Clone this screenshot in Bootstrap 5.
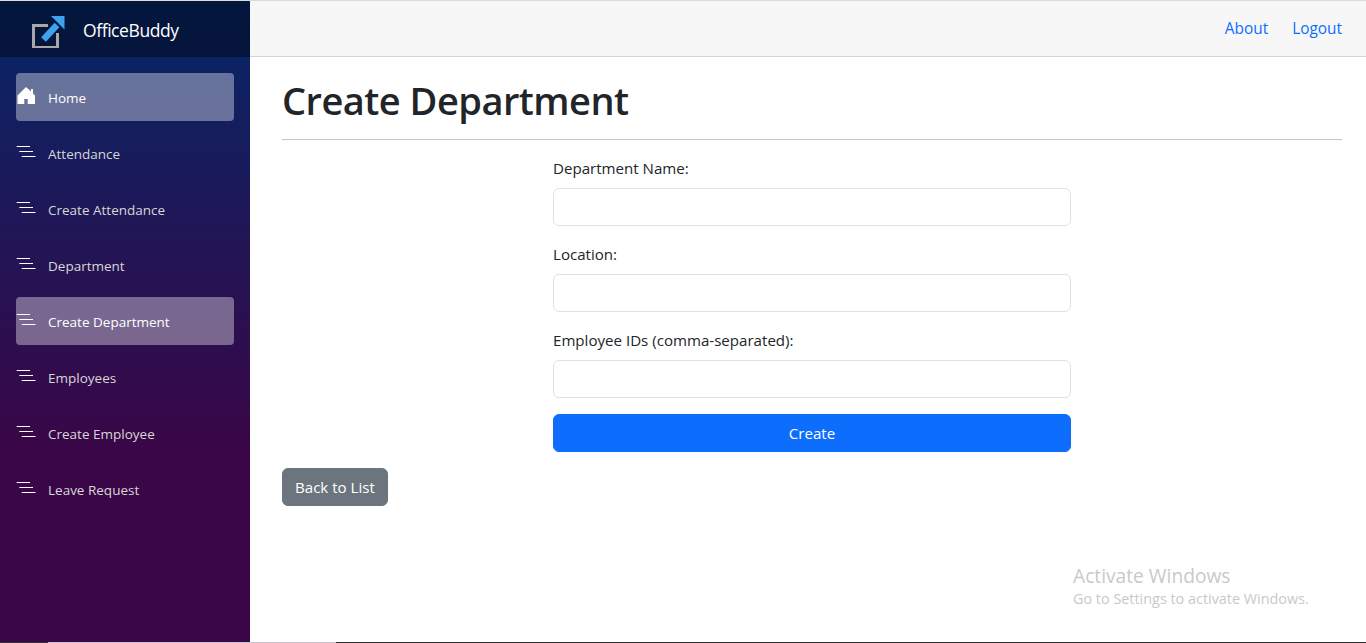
<!DOCTYPE html>
<html lang="en">
  <head>
    <meta charset="UTF-8" />
    <meta name="viewport" content="width=device-width, initial-scale=1.0" />
    <title>Create Department</title>
    <link
      href="https://cdn.jsdelivr.net/npm/bootstrap@5.3.2/dist/css/bootstrap.min.css"
      rel="stylesheet"
    />
    <style>
      html,
      body {
        height: 100%;
        overflow: hidden;
      }
      body {
        font-family: "Open Sans", "Noto Sans", sans-serif;
        font-size: 16px;
        color: #212529;
      }
      .shot-edge {
        height: 1px;
        background-color: #dcdcdc;
      }
      .app-shell {
        height: 641px;
      }
      .app-sidebar {
        width: 250px;
        background-image: linear-gradient(180deg, #052767 0%, #3a0647 70%);
      }
      .brand-row {
        height: 56px;
        background-color: rgba(0, 0, 0, 0.4);
        padding-left: 31px;
      }
      .brand-name {
        color: #fff;
        font-size: 17.5px;
        margin-left: 14px;
        padding-top: 3px;
        letter-spacing: -0.42px;
      }
      .side-menu {
        padding: 16px 16px 0;
      }
      .side-link {
        height: 48px;
        margin-bottom: 8px;
        border-radius: 4px;
        color: #d7d7d7;
        font-size: 13.5px;
        text-decoration: none;
      }
      .side-link svg {
        width: 20px;
        height: 20px;
        margin-right: 12px;
        flex-shrink: 0;
      }
      .side-link span {
        padding-top: 2px;
      }
      .side-link.is-active {
        background-color: rgba(255, 255, 255, 0.37);
        color: #fff;
      }
      .main-top {
        height: 56px;
        background-color: #f7f7f7;
        border-bottom: 1px solid #d6d5d5;
        padding-right: 24px;
      }
      .main-top a {
        margin-left: 24px;
        font-size: 15.4px;
        text-decoration: none;
        color: #0d6efd;
      }
      .page-body {
        padding: 19px 24px 0 32px;
      }
      .page-title {
        font-size: 38px;
        font-weight: 600;
        line-height: 48px;
        margin-bottom: 15px;
        letter-spacing: -0.52px;
      }
      .page-rule {
        margin: 0 0 16px;
        border-color: #c6c6c6;
        opacity: 1;
      }
      .form-wrap {
        width: 518px;
        margin-left: 271px;
      }
      .form-wrap .form-label {
        margin-bottom: 8px;
        font-size: 15.1px;
        line-height: 24px;
      }
      .form-wrap .form-control {
        height: 38px;
      }
      .field-gap {
        margin-bottom: 16px;
      }
      .page-body .btn {
        font-size: 15.1px;
        line-height: 24px;
      }
      .activate-note {
        position: absolute;
        left: 1073px;
        top: 564px;
        color: #c9c9c9;
        pointer-events: none;
      }
      .activate-note .note-head {
        font-size: 19.2px;
        line-height: 24px;
      }
      .activate-note .note-sub {
        font-size: 14.4px;
        line-height: 20px;
        padding-top: 1px;
      }
      .shot-taskbar {
        position: absolute;
        left: 0;
        right: 0;
        bottom: 0;
        height: 1px;
        background-image: linear-gradient(
          90deg,
          #333 0,
          #333 48px,
          #c8c4c8 48px,
          #c8c4c8 336px,
          #2d2d2d 336px
        );
      }
    </style>
  </head>
  <body>
    <div class="shot-edge"></div>
    <div class="app-shell d-flex">
      <!-- Sidebar -->
      <aside class="app-sidebar d-flex flex-column">
        <div class="brand-row d-flex align-items-center">
          <svg width="38" height="38" viewBox="0 0 38 38" fill="none">
            <path d="M17 15.500H2.500v22h24V23" stroke="#a8a8a8" stroke-width="3" />
            <path d="M12.500 29.500 26 15" stroke="#3fa2ee" stroke-width="6.500" />
            <path d="M20 6h13.500v13.500z" fill="#3fa2ee" />
          </svg>
          <span class="brand-name">OfficeBuddy</span>
        </div>
        <nav class="side-menu">
          <a class="side-link is-active d-flex align-items-center" href="#">
            <svg viewBox="0 0 20 20"><path d="M10 0 1.500 8.500V17h6.800v-5h3.400v5H19V8.500L17 6.500V2h-2v2.500z" fill="#fff" /></svg>
            <span>Home</span>
          </a>
          <a class="side-link d-flex align-items-center" href="#">
            <svg viewBox="0 0 20 20"><path d="M.7 3.500H14M3.300 8.500H17M5.700 13.500h13.800" stroke="#fff" stroke-width="1.100" /></svg>
            <span>Attendance</span>
          </a>
          <a class="side-link d-flex align-items-center" href="#">
            <svg viewBox="0 0 20 20"><path d="M.7 3.500H14M3.300 8.500H17M5.700 13.500h13.800" stroke="#fff" stroke-width="1.100" /></svg>
            <span>Create Attendance</span>
          </a>
          <a class="side-link d-flex align-items-center" href="#">
            <svg viewBox="0 0 20 20"><path d="M.7 3.500H14M3.300 8.500H17M5.700 13.500h13.800" stroke="#fff" stroke-width="1.100" /></svg>
            <span>Department</span>
          </a>
          <a class="side-link is-active d-flex align-items-center" href="#">
            <svg viewBox="0 0 20 20"><path d="M.7 3.500H14M3.300 8.500H17M5.700 13.500h13.800" stroke="#fff" stroke-width="1.100" /></svg>
            <span>Create Department</span>
          </a>
          <a class="side-link d-flex align-items-center" href="#">
            <svg viewBox="0 0 20 20"><path d="M.7 3.500H14M3.300 8.500H17M5.700 13.500h13.800" stroke="#fff" stroke-width="1.100" /></svg>
            <span>Employees</span>
          </a>
          <a class="side-link d-flex align-items-center" href="#">
            <svg viewBox="0 0 20 20"><path d="M.7 3.500H14M3.300 8.500H17M5.700 13.500h13.800" stroke="#fff" stroke-width="1.100" /></svg>
            <span>Create Employee</span>
          </a>
          <a class="side-link d-flex align-items-center" href="#">
            <svg viewBox="0 0 20 20"><path d="M.7 3.500H14M3.300 8.500H17M5.700 13.500h13.800" stroke="#fff" stroke-width="1.100" /></svg>
            <span>Leave Request</span>
          </a>
        </nav>
      </aside>
      <!-- Main -->
      <main class="flex-grow-1">
        <div class="main-top d-flex align-items-center justify-content-end">
          <a href="#">About</a>
          <a href="#">Logout</a>
        </div>
        <div class="page-body">
          <h1 class="page-title">Create Department</h1>
          <hr class="page-rule" />
          <form class="form-wrap">
            <div class="field-gap">
              <label class="form-label" for="deptName">Department Name:</label>
              <input class="form-control" id="deptName" type="text" />
            </div>
            <div class="field-gap">
              <label class="form-label" for="deptLocation">Location:</label>
              <input class="form-control" id="deptLocation" type="text" />
            </div>
            <div class="field-gap">
              <label class="form-label" for="deptEmployees">Employee IDs (comma-separated):</label>
              <input class="form-control" id="deptEmployees" type="text" />
            </div>
            <button class="btn btn-primary w-100" type="button">Create</button>
          </form>
          <a class="btn btn-secondary mt-3" href="#">Back to List</a>
        </div>
      </main>
    </div>
    <div class="activate-note">
      <div class="note-head">Activate Windows</div>
      <div class="note-sub">Go to Settings to activate Windows.</div>
    </div>
    <div class="shot-taskbar"></div>
    <script src="https://cdn.jsdelivr.net/npm/bootstrap@5.3.2/dist/js/bootstrap.bundle.min.js"></script>
  </body>
</html>
